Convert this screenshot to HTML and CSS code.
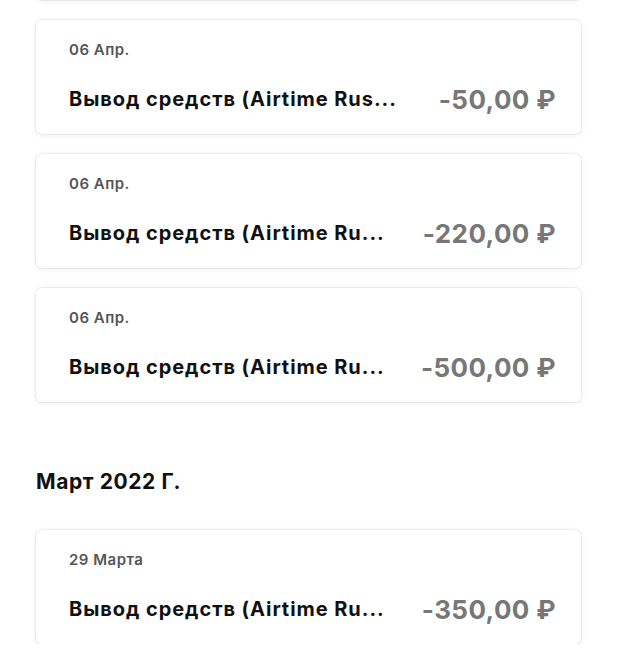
FILE: index.html
```html
<!DOCTYPE html>
<html lang="ru">
<head>
<meta charset="utf-8">
<link rel="stylesheet" href="styles.css">
</head>
<body>
<div class="page">
  <div class="list">
    <div class="card card-prev"></div>
    <div class="card">
      <div class="date">06 Апр.</div>
      <div class="row"><span class="title">Вывод средств (Airtime Rus...</span><span class="amount">-50,00 ₽</span></div>
    </div>
    <div class="card">
      <div class="date">06 Апр.</div>
      <div class="row"><span class="title">Вывод средств (Airtime Ru...</span><span class="amount">-220,00 ₽</span></div>
    </div>
    <div class="card">
      <div class="date">06 Апр.</div>
      <div class="row"><span class="title">Вывод средств (Airtime Ru...</span><span class="amount">-500,00 ₽</span></div>
    </div>
  </div>
  <h2 class="month">Март 2022 Г.</h2>
  <div class="list">
    <div class="card">
      <div class="date">29 Марта</div>
      <div class="row"><span class="title">Вывод средств (Airtime Ru...</span><span class="amount">-350,00 ₽</span></div>
    </div>
  </div>
</div>
</body>
</html>
```
FILE: styles.css
```css
html, body {
  margin: 0;
  padding: 0;
  background: #ffffff;
}
body {
  font-family: Inter, "Open Sans", "Liberation Sans", sans-serif;
  color: #111;
  overflow: hidden;
}
.page {
  padding: 0 37px 0 36px;
}
.list {
  display: flex;
  flex-direction: column;
  gap: 20px;
}
.card {
  background: #fff;
  border-radius: 6px;
  box-shadow: 0 0 0 1px rgba(0,0,0,0.05), 0 1px 6px rgba(0,0,0,0.08);
  padding: 20px 25px 22px 33px;
  height: 114px;
  box-sizing: border-box;
}
.card-prev {
  margin-top: -114px;
}
.date {
  font-size: 15px;
  font-weight: 600;
  color: #555;
  line-height: 20px;
  letter-spacing: 0.5px;
}
.row {
  display: flex;
  align-items: center;
  justify-content: space-between;
  margin-top: 24px;
  height: 30px;
}
.title {
  font-size: 20px;
  font-weight: 700;
  color: #111;
  white-space: nowrap;
  letter-spacing: 0.95px;
}
.amount {
  font-size: 26px;
  font-weight: 700;
  color: #777;
  white-space: nowrap;
  letter-spacing: 0.4px;
}
.month {
  margin: 0;
  padding: 67px 0 35px;
  font-size: 21px;
  font-weight: 700;
  color: #111;
  line-height: 26px;
  letter-spacing: 0.6px;
}
```
